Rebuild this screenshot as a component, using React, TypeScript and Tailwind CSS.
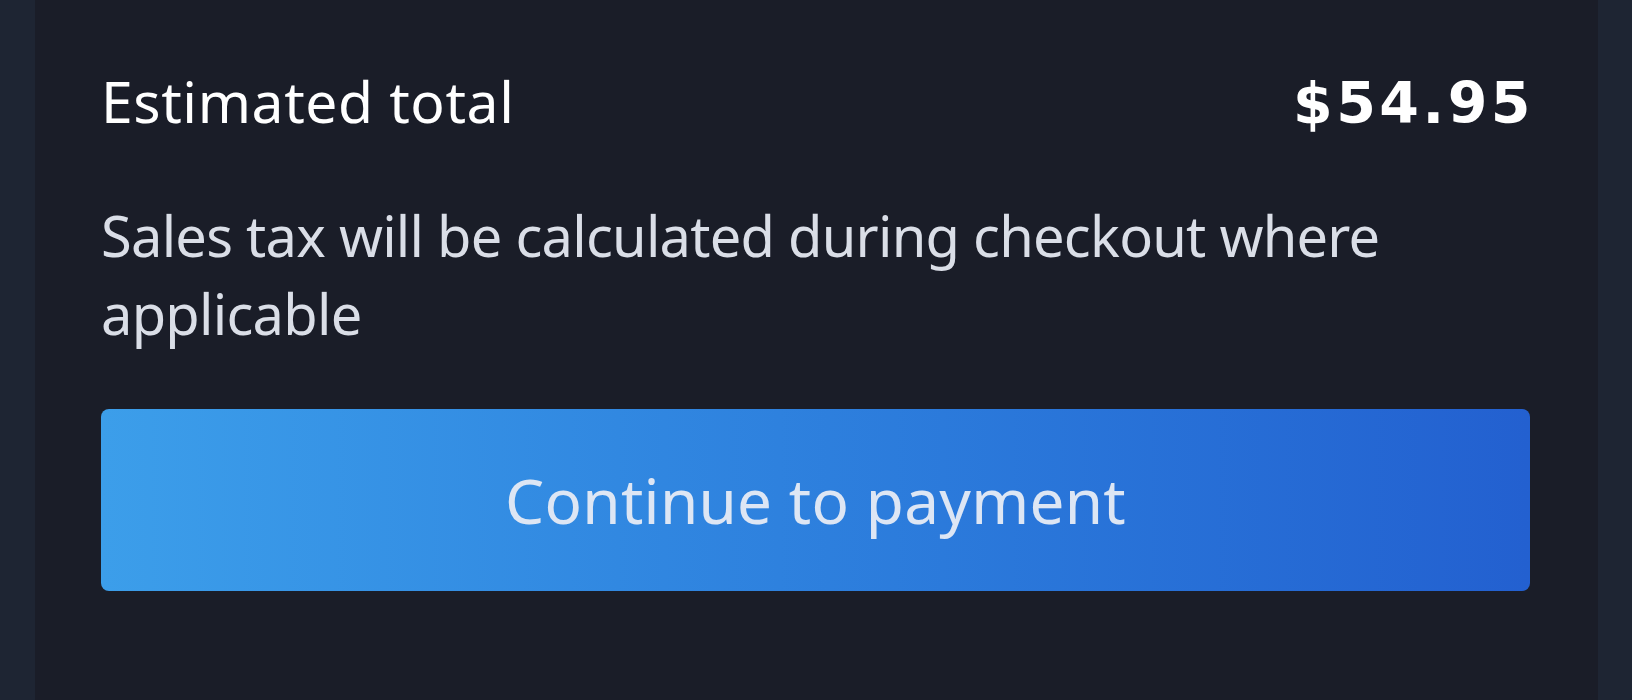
export default function App() {
  return (
    <div className="flex h-[700px] w-full bg-[#1a1d27]">
      <div className="w-[35px] shrink-0 bg-[#1e2533]" />
      <div className="flex-1 bg-[#1a1d28] pl-[66px] pr-[68px] pt-[61px] font-['Noto_Sans',sans-serif]">
        <div className="flex items-baseline justify-between leading-[80px]">
          <span className="text-[57px] tracking-[0.6px] text-white">Estimated total</span>
          <span className="mr-[-4px] font-['DejaVu_Sans',sans-serif] text-[57px] font-bold tracking-[3.5px] text-white">$54.95</span>
        </div>
        <p className="mt-[53px] text-[56px] leading-[78px] tracking-[-0.75px] text-[#dadee7]">
          Sales tax will be calculated during checkout where applicable
        </p>
        <button className="mt-[57px] flex h-[182px] w-full items-center justify-center rounded-[8px] bg-gradient-to-r from-[#3c9eea] to-[#2360d0] text-[62px] tracking-[0.3px] text-[#dde6f4]">
          Continue to payment
        </button>
      </div>
      <div className="w-[34px] shrink-0 bg-[#1e2533]" />
    </div>
  );
}
